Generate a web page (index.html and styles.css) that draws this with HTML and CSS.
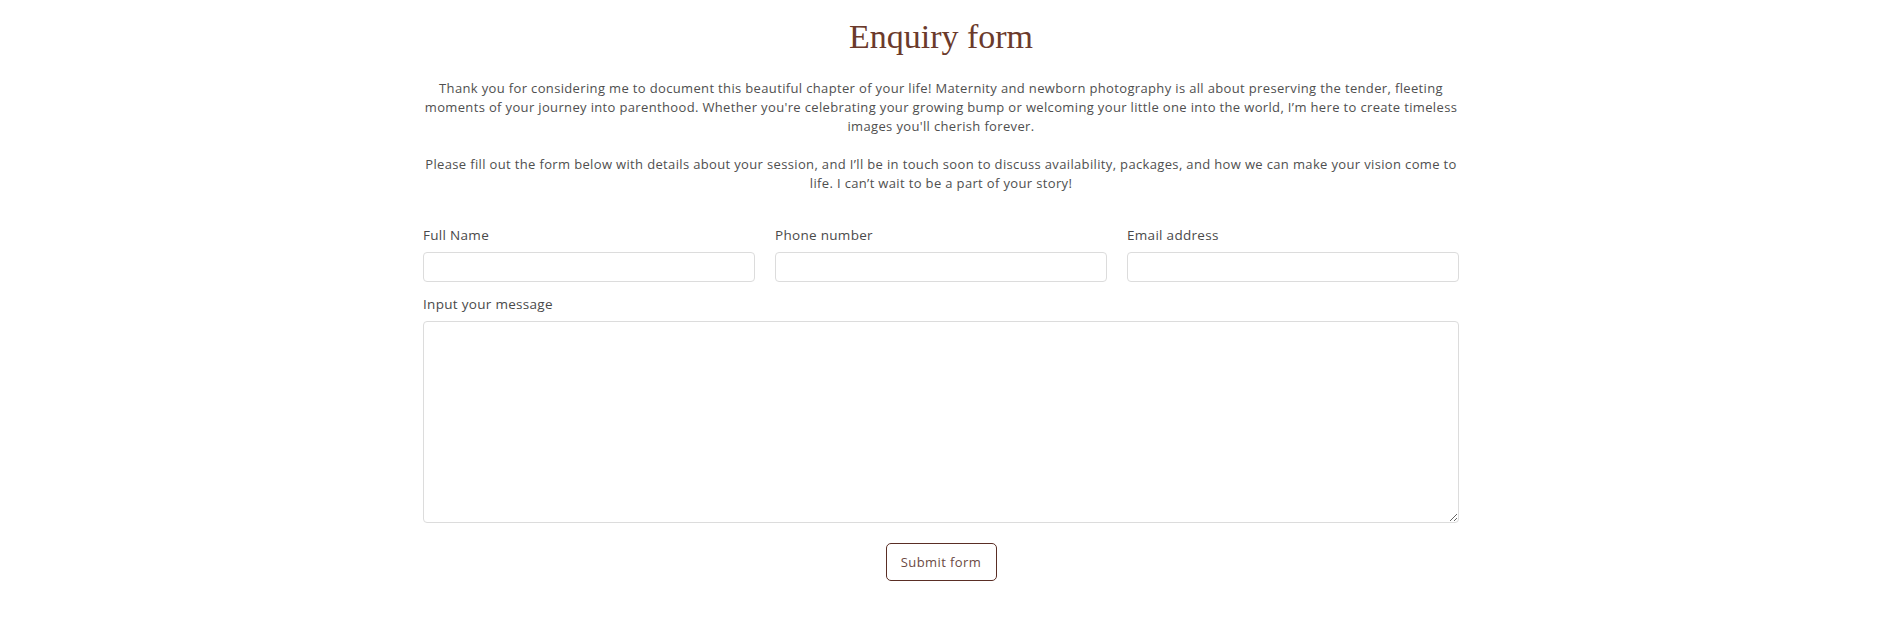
FILE: index.html
```html
<!DOCTYPE html>
<html lang="en">
<head>
<meta charset="utf-8">
<title>Enquiry form</title>
<link rel="stylesheet" href="styles.css">
</head>
<body>
<main class="enquiry">
  <h1 class="enquiry__title">Enquiry form</h1>
  <div class="enquiry__intro">
    <p>Thank you for considering me to document this beautiful chapter of your life! Maternity and newborn photography is all about preserving the tender, fleeting<br>moments of your journey into parenthood. Whether you're celebrating your growing bump or welcoming your little one into the world, I’m here to create timeless<br>images you'll cherish forever.</p>
    <p>Please fill out the form below with details about your session, and I’ll be in touch soon to discuss availability, packages, and how we can make your vision come to<br>life. I can’t wait to be a part of your story!</p>
  </div>
  <form class="form">
    <div class="form__row">
      <label class="field">
        <span class="field__label">Full Name</span>
        <input class="field__input" type="text">
      </label>
      <label class="field">
        <span class="field__label">Phone number</span>
        <input class="field__input" type="tel">
      </label>
      <label class="field">
        <span class="field__label">Email address</span>
        <input class="field__input" type="email">
      </label>
    </div>
    <label class="field">
      <span class="field__label">Input your message</span>
      <textarea class="field__textarea"></textarea>
    </label>
    <div class="form__actions">
      <button class="form__submit" type="button">Submit form</button>
    </div>
  </form>
</main>
</body>
</html>
```
FILE: styles.css
```css
* { box-sizing: border-box; }
html, body { margin: 0; background: #fff; }
body {
  padding-right: 10px;
  font-family: "Open Sans", "Noto Sans", sans-serif;
  color: #4a4a4a;
}
.enquiry {
  width: 1036px;
  margin: 0 auto;
  padding-top: 17px;
}
.enquiry__title {
  margin: 0;
  text-align: center;
  font-family: "Liberation Serif", "DejaVu Serif", serif;
  font-weight: 400;
  font-size: 34px;
  line-height: 40px;
  color: #6b3a2b;
}
.enquiry__intro {
  margin-top: 22px;
  text-align: center;
  font-size: 13px;
  line-height: 19px;
  letter-spacing: 0.35px;
  color: #4f4f4f;
}
.enquiry__intro p { margin: 0 0 19px; }
.enquiry__intro p:last-child { margin-bottom: 0; }
.form {
  margin-top: 34px;
  display: flex;
  flex-direction: column;
  gap: 14px;
}
.form__row {
  display: grid;
  grid-template-columns: repeat(3, 1fr);
  gap: 20px;
}
.field {
  display: flex;
  flex-direction: column;
  gap: 9px;
}
.field__label {
  font-size: 13.5px;
  line-height: 16px;
  color: #4a4a4a;
  letter-spacing: 0.3px;
}
.field__input,
.field__textarea {
  width: 100%;
  border: 1px solid #dcdcdc;
  border-radius: 4px;
  background: #fff;
  font: inherit;
}
.field__input { height: 30px; }
.field__textarea { height: 202px; resize: vertical; }
.form__actions {
  display: flex;
  justify-content: center;
  padding-top: 6px;
}
.form__submit {
  width: 111px;
  height: 38px;
  border: 1px solid #5a2e25;
  border-radius: 5px;
  background: #fff;
  font-family: "Open Sans", "Noto Sans", sans-serif;
  font-size: 13px;
  color: #6b4a44;
  letter-spacing: 0.4px;
}
```
